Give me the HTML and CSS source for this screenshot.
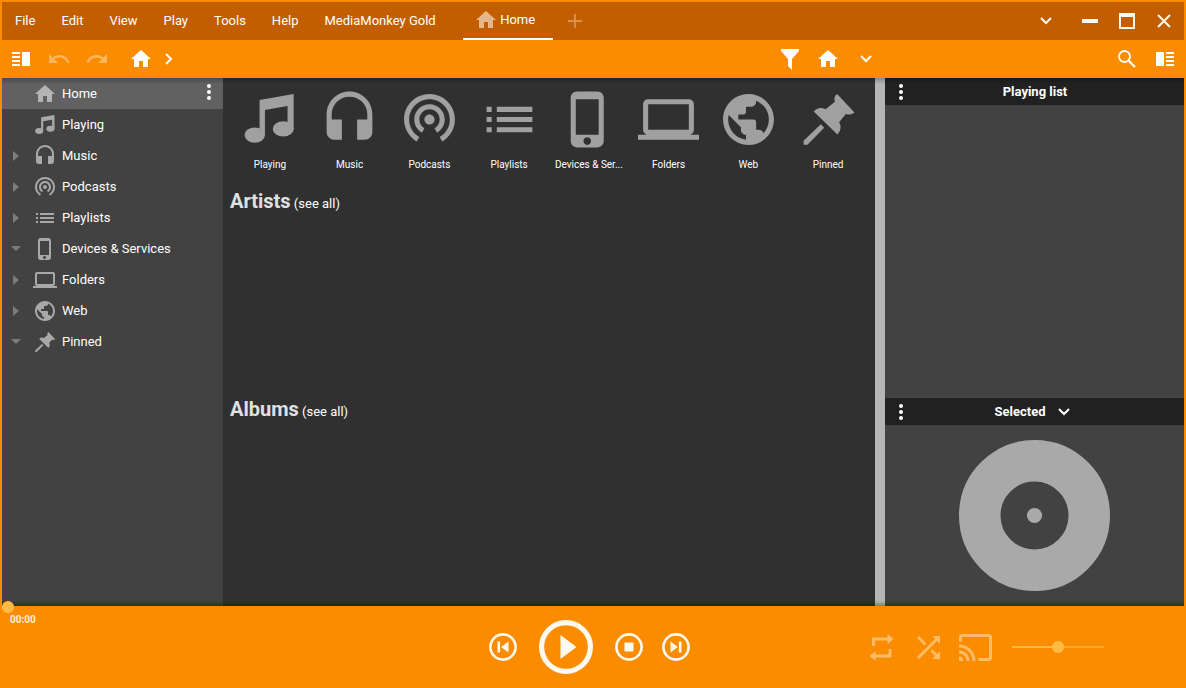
FILE: index.html
```html
<!DOCTYPE html>
<html lang="en">
<head>
<meta charset="utf-8">
<title>MediaMonkey</title>
<link rel="stylesheet" href="styles.css">
</head>
<body>
<svg class="sprite" aria-hidden="true">
  <symbol id="home" viewBox="0 0 24 24"><path d="M10 20V14H14V20H19V12H22L12 3L2 12H5V20Z"/></symbol>
  <symbol id="note" viewBox="0 0 24 24"><path d="M8.1 4.3L21.5 2V16H19.1V6.7L10.2 8.3V18H8.1Z"/><ellipse cx="6.2" cy="18.1" rx="4" ry="3"/><ellipse cx="17.4" cy="15.7" rx="4.1" ry="3"/></symbol>
  <symbol id="headset" viewBox="0 0 24 24"><path d="M12 1C7 1 3 5 3 10V17A3 3 0 0 0 6 20H9V12H5V10A7 7 0 0 1 12 3A7 7 0 0 1 19 10V12H15V20H18A3 3 0 0 0 21 17V10C21 5 16.97 1 12 1Z"/></symbol>
  <symbol id="podcast" viewBox="0 1 24 24"><path d="M12 11c-1.1 0-2 .9-2 2s.9 2 2 2 2-.9 2-2-.9-2-2-2zm6 2c0-3.31-2.69-6-6-6s-6 2.69-6 6c0 2.22 1.21 4.15 3 5.19l1-1.74c-1.19-.7-2-1.97-2-3.45 0-2.21 1.79-4 4-4s4 1.79 4 4c0 1.48-.81 2.75-2 3.45l1 1.74c1.79-1.04 3-2.97 3-5.19zM12 3C6.48 3 2 7.48 2 13c0 3.7 2.01 6.92 4.99 8.65l1-1.73C5.61 18.53 4 15.96 4 13c0-4.42 3.58-8 8-8s8 3.58 8 8c0 2.96-1.61 5.53-4 6.92l1 1.73c2.99-1.73 5-4.95 5-8.65 0-5.52-4.48-10-10-10z"/></symbol>
  <symbol id="list" viewBox="0 0 24 24"><path d="M3 7h2v2H3zM7 7h14v2H7zM3 11h2v2H3zM7 11h14v2H7zM3 15h2v2H3zM7 15h14v2H7z"/></symbol>
  <symbol id="phone" viewBox="0 0 24 24"><path d="M15.5 1h-8C6.12 1 5 2.12 5 3.5v17C5 21.88 6.12 23 7.5 23h8c1.38 0 2.5-1.12 2.5-2.5v-17C18 2.12 16.88 1 15.5 1zm-4 21c-.83 0-1.5-.67-1.5-1.5s.67-1.5 1.5-1.5 1.5.67 1.5 1.5-.67 1.5-1.5 1.5zm4.5-4H7V4h9v14z"/></symbol>
  <symbol id="laptop" viewBox="0 0 24 24"><path d="M20 18c1.1 0 1.99-.9 1.99-2L22 6c0-1.1-.9-2-2-2H4c-1.1 0-2 .9-2 2v10c0 1.1.9 2 2 2H0v2h24v-2h-4zM4 6h16v10H4V6z"/></symbol>
  <symbol id="globe" viewBox="0 0 24 24"><path d="M12 2C6.48 2 2 6.48 2 12s4.48 10 10 10 10-4.48 10-10S17.52 2 12 2zm-1 17.93c-3.95-.49-7-3.85-7-7.93 0-.62.08-1.21.21-1.79L9 15v1c0 1.1.9 2 2 2v1.93zm6.9-2.54c-.26-.81-1-1.39-1.9-1.39h-1v-3c0-.55-.45-1-1-1H8v-2h2c.55 0 1-.45 1-1V7h2c1.1 0 2-.9 2-2v-.41c2.93 1.19 5 4.06 5 7.41 0 2.08-.8 3.97-2.1 5.39z"/></symbol>
  <symbol id="pin" viewBox="0 0 24 24"><path d="M15.4 2L22.2 9.2Q21 10.4 18.8 9.8L16.2 13.1Q17.7 15.6 15.5 17.9L6.2 8.9Q8 6.7 10.9 8L14.5 5Q13.8 3.2 15.4 2ZM9 13.9L10.3 15.2L3.7 21.9H2.2V20.4Z"/></symbol>
  <symbol id="right" viewBox="0 0 6 10"><path d="M0 0L6 5L0 10Z"/></symbol>
  <symbol id="down" viewBox="0 0 10 5"><path d="M0 0H10L5 5Z"/></symbol>
  <symbol id="kebab" viewBox="0 0 4 16"><circle cx="2" cy="2" r="2"/><circle cx="2" cy="8" r="2"/><circle cx="2" cy="14" r="2"/></symbol>
  <symbol id="chevron" viewBox="0 0 12 8"><path d="M1 1L6 6L11 1" fill="none" stroke="currentColor" stroke-width="2"/></symbol>
  <symbol id="undo" viewBox="0 0 24 24"><path d="M12.5 8C9.85 8 7.45 9 5.6 10.6L2 7V16H11L7.38 12.38C8.77 11.22 10.54 10.5 12.5 10.5C16.04 10.5 19.05 12.81 20.1 16L22.47 15.22C21.08 11.03 17.15 8 12.5 8Z"/></symbol>
  <symbol id="columns" viewBox="0 0 18 14"><path d="M0 0h8v2H0zM0 4h8v2H0zM0 8h8v2H0zM0 12h8v2H0zM10 0h8v14h-8z"/></symbol>
</svg>

<div class="window">
  <header class="titlebar">
    <nav class="menu" aria-label="Menu">
      <button>File</button><button>Edit</button><button>View</button><button>Play</button><button>Tools</button><button>Help</button><button>MediaMonkey Gold</button>
    </nav>
    <button class="tab"><svg class="icon"><use href="#home"/></svg>Home</button>
    <button class="add" aria-label="New tab"><svg width="14" height="14" viewBox="0 0 14 14"><path d="M7 0V14M0 7H14" stroke="currentColor" stroke-width="2"/></svg></button>
    <div class="controls">
      <button class="more" aria-label="More"><svg width="12" height="8"><use href="#chevron"/></svg></button>
      <button aria-label="Minimize"><svg width="16" height="4"><rect width="16" height="4"/></svg></button>
      <button aria-label="Maximize"><svg width="16" height="16" viewBox="0 0 16 16"><path fill-rule="evenodd" d="M0 0H16V16H0ZM2 4V14H14V4Z"/></svg></button>
      <button aria-label="Close"><svg width="14" height="14" viewBox="0 0 14 14"><path d="M1 1L13 13M13 1L1 13" stroke="currentColor" stroke-width="2"/></svg></button>
    </div>
  </header>

  <div class="toolbar">
    <button aria-label="Left panel"><svg width="18" height="14"><use href="#columns"/></svg></button>
    <button class="dim" aria-label="Undo"><svg class="icon"><use href="#undo"/></svg></button>
    <button class="dim" aria-label="Redo"><svg class="icon flip"><use href="#undo"/></svg></button>
    <button class="crumb" aria-label="Home"><svg class="icon"><use href="#home"/></svg></button>
    <button class="next" aria-label="Expand"><svg width="8" height="12" viewBox="0 0 8 12"><path d="M1 1L6 6L1 11" fill="none" stroke="currentColor" stroke-width="2"/></svg></button>
    <div class="view">
      <button aria-label="Filter"><svg width="18" height="21" viewBox="0 0 18 21"><path d="M0 0H18V2L11 10V21L7 17V10L0 2Z"/></svg></button>
      <button aria-label="View"><svg class="icon"><use href="#home"/></svg></button>
      <button aria-label="Views"><svg width="12" height="8"><use href="#chevron"/></svg></button>
    </div>
    <div class="find">
      <button aria-label="Search"><svg width="18" height="18" viewBox="0 0 18 18"><circle cx="6.5" cy="6.5" r="5.5" fill="none" stroke="currentColor" stroke-width="1.8"/><path d="M10.5 10.5L17 17" stroke="currentColor" stroke-width="2.2"/></svg></button>
      <button aria-label="Right panel"><svg class="flip" width="18" height="14"><use href="#columns"/></svg></button>
    </div>
  </div>

  <div class="main">
    <nav class="tree" aria-label="Library">
      <div class="row selected"><span class="arrow"></span><a href="#"><svg class="icon"><use href="#home"/></svg>Home</a><button class="options" aria-label="Options"><svg width="4" height="16"><use href="#kebab"/></svg></button></div>
      <div class="row"><span class="arrow"></span><a href="#"><svg class="icon"><use href="#note"/></svg>Playing</a></div>
      <div class="row"><span class="arrow"><svg width="6" height="10"><use href="#right"/></svg></span><a href="#"><svg class="icon"><use href="#headset"/></svg>Music</a></div>
      <div class="row"><span class="arrow"><svg width="6" height="10"><use href="#right"/></svg></span><a href="#"><svg class="icon"><use href="#podcast"/></svg>Podcasts</a></div>
      <div class="row"><span class="arrow"><svg width="6" height="10"><use href="#right"/></svg></span><a href="#"><svg class="icon"><use href="#list"/></svg>Playlists</a></div>
      <div class="row"><span class="arrow"><svg width="10" height="5"><use href="#down"/></svg></span><a href="#"><svg class="icon"><use href="#phone"/></svg>Devices &amp; Services</a></div>
      <div class="row"><span class="arrow"><svg width="6" height="10"><use href="#right"/></svg></span><a href="#"><svg class="icon"><use href="#laptop"/></svg>Folders</a></div>
      <div class="row"><span class="arrow"><svg width="6" height="10"><use href="#right"/></svg></span><a href="#"><svg class="icon"><use href="#globe"/></svg>Web</a></div>
      <div class="row"><span class="arrow"><svg width="10" height="5"><use href="#down"/></svg></span><a href="#"><svg class="icon"><use href="#pin"/></svg>Pinned</a></div>
    </nav>

    <main class="content">
      <div class="tiles">
        <a href="#"><svg><use href="#note"/></svg><span>Playing</span></a>
        <a href="#"><svg><use href="#headset"/></svg><span>Music</span></a>
        <a href="#"><svg><use href="#podcast"/></svg><span>Podcasts</span></a>
        <a href="#"><svg><use href="#list"/></svg><span>Playlists</span></a>
        <a href="#" title="Devices &amp; Services"><svg><use href="#phone"/></svg><span>Devices &amp; Ser...</span></a>
        <a href="#"><svg><use href="#laptop"/></svg><span>Folders</span></a>
        <a href="#"><svg><use href="#globe"/></svg><span>Web</span></a>
        <a href="#"><svg><use href="#pin"/></svg><span>Pinned</span></a>
      </div>
      <section class="shelf"><h2>Artists</h2> <a href="#">(see all)</a></section>
      <section class="shelf"><h2>Albums</h2> <a href="#">(see all)</a></section>
    </main>

    <div class="splitter"></div>

    <aside class="side">
      <div class="head"><button aria-label="Playing list options"><svg width="4" height="16"><use href="#kebab"/></svg></button><h3>Playing list</h3></div>
      <div class="queue"></div>
      <div class="head"><button aria-label="Preview options"><svg width="4" height="16"><use href="#kebab"/></svg></button><h3 class="picker">Selected<svg width="12" height="8"><use href="#chevron"/></svg></h3></div>
      <div class="art"><svg width="151" height="151" viewBox="0 0 151 151"><circle cx="75.5" cy="75.5" r="54.75" fill="none" stroke="currentColor" stroke-width="41.5"/><circle cx="75.5" cy="75.5" r="7.6"/></svg></div>
    </aside>
  </div>

  <footer class="player">
    <input class="seek" type="range" min="0" max="100" value="0" aria-label="Position">
    <span class="time">00:00</span>
    <div class="transport">
      <button aria-label="Previous"><svg width="28" height="28" viewBox="0 0 28 28"><circle cx="14" cy="14" r="12.6" fill="none" stroke="currentColor" stroke-width="2.6"/><path d="M8.5 8.5h2.6v11H8.5zM19.5 8.5v11L12 14z"/></svg></button>
      <button class="play" aria-label="Play"><svg width="54" height="54" viewBox="0 0 54 54"><circle cx="27" cy="27" r="24.4" fill="none" stroke="currentColor" stroke-width="5.2"/><path d="M21.5 15L37.5 27L21.5 39Z"/></svg></button>
      <button class="stop" aria-label="Stop"><svg width="28" height="28" viewBox="0 0 28 28"><circle cx="14" cy="14" r="12.6" fill="none" stroke="currentColor" stroke-width="2.6"/><path d="M9.5 9.5h9v9h-9z"/></svg></button>
      <button aria-label="Next"><svg width="28" height="28" viewBox="0 0 28 28"><circle cx="14" cy="14" r="12.6" fill="none" stroke="currentColor" stroke-width="2.6"/><path d="M19.5 8.5h-2.6v11h2.6zM8.5 8.5v11L16 14z"/></svg></button>
    </div>
    <div class="extras">
      <button aria-label="Repeat"><svg width="25" height="27" viewBox="0 0 25 27"><path d="M4.5 12V5H19M21 15V22H5" fill="none" stroke="currentColor" stroke-width="2.8"/><path d="M18.5 0L24.5 5L18.5 10ZM6.5 17L.5 22L6.5 27Z"/></svg></button>
      <button aria-label="Shuffle"><svg width="23" height="23" viewBox="4 4 16 16"><path d="M10.59 9.17L5.41 4 4 5.41l5.17 5.17 1.42-1.41zM14.5 4l2.04 2.04L4 18.59 5.41 20 17.96 7.46 20 9.5V4h-5.5zm.33 9.41l-1.41 1.41 3.13 3.13L14.5 20H20v-5.5l-2.04 2.04-3.13-3.13z"/></svg></button>
      <button aria-label="Cast"><svg width="33" height="27" viewBox="1 3 22 18"><path d="M21 3H3c-1.1 0-2 .9-2 2v3h2V5h18v14h-7v2h7c1.1 0 2-.9 2-2V5c0-1.1-.9-2-2-2zM1 18v3h3c0-1.66-1.34-3-3-3zm0-4v2c2.76 0 5 2.24 5 5h2c0-3.87-3.13-7-7-7zm0-4v2c4.97 0 9 4.03 9 9h2c0-6.08-4.93-11-11-11z"/></svg></button>
      <input class="volume" type="range" min="0" max="100" value="50" aria-label="Volume">
    </div>
  </footer>
</div>
</body>
</html>
```

FILE: styles.css
```css
:root {
  --accent: #fb8c00;
  --accent-dark: #c25e00;
  --knob: #ffbb45;
  --panel: #424242;
  --icon: #a0a0a0;
}
* { box-sizing: border-box; }
body {
  margin: 0;
  font: 400 13px/16px Roboto, "Liberation Sans", sans-serif;
  color: #fff;
}
button {
  display: flex;
  align-items: center;
  justify-content: center;
  padding: 0;
  border: 0;
  background: none;
  color: inherit;
  font: inherit;
}
a { color: inherit; text-decoration: none; }
svg { display: block; flex: none; fill: currentColor; }
h2, h3 { margin: 0; }
.sprite { position: absolute; width: 0; height: 0; }
.icon { width: 24px; height: 24px; }
.flip { transform: scaleX(-1); }

.window {
  display: flex;
  flex-direction: column;
  height: 100vh;
  padding: 2px 2px 0;
  background: var(--accent);
}

.titlebar { display: flex; height: 38px; background: var(--accent-dark); }
.menu { display: flex; }
.menu button { padding: 0 13px; }
.tab {
  gap: 2px;
  width: 90px;
  margin-left: 14px;
  padding-right: 6px;
  border-bottom: 2px solid #fff;
}
.tab .icon { color: #e6b78c; }
.add { width: 44px; color: #d98e4c; }
.controls { display: flex; margin-left: auto; padding-right: 2px; color: #fff8ee; }
.controls button { width: 37px; }
.controls .more { margin-right: 7px; }

.toolbar { display: flex; height: 38px; }
.toolbar button { width: 38px; height: 38px; }
.toolbar .dim { color: #fdb65c; }
.toolbar .crumb { width: 24px; margin-left: 13px; }
.toolbar .next { width: 32px; }
.view { display: flex; margin-left: auto; }
.find { display: flex; justify-content: flex-end; width: 299px; }

.main { position: relative; display: flex; flex: 1; min-height: 0; background: var(--panel); }
.main::after {
  content: "";
  position: absolute;
  inset: 0;
  pointer-events: none;
  background:
    linear-gradient(rgba(0, 0, 0, .25), transparent) top / 100% 6px no-repeat,
    linear-gradient(transparent, rgba(0, 0, 0, .3)) bottom / 100% 5px no-repeat;
}

.tree { width: 221px; background: var(--panel); }
.row { display: flex; align-items: center; height: 31px; }
.row.selected { background: #616161; }
.row a { display: flex; align-items: center; flex: 1; gap: 5px; }
.row .icon { color: #a8a8a8; }
.selected .icon { color: #b4b4b4; }
.arrow { display: flex; justify-content: center; width: 28px; margin-right: 3px; color: #7c7c7c; }
.options { align-self: flex-start; width: 28px; height: 28px; }

.content { flex: 1; min-width: 0; background: #303030; }
.tiles { display: grid; grid-template-columns: repeat(8, minmax(0, 1fr)); padding: 11px 7px 0; }
.tiles a { display: flex; flex-direction: column; align-items: center; gap: 9px; }
.tiles svg { width: 61px; height: 61px; color: var(--icon); }
.tiles span { font-size: 10px; line-height: 12px; white-space: nowrap; }
.shelf { height: 208px; padding: 17px 7px 0; }
.shelf h2 { display: inline; font-size: 20px; font-weight: 700; line-height: 26px; color: #e0e0e0; }

.splitter { width: 10px; background: #b5b5b5; }

.side { display: flex; flex-direction: column; width: 299px; }
.head { display: flex; align-items: center; height: 27px; background: #212121; }
.head button { width: 32px; height: 27px; }
.head h3 { display: flex; align-items: center; justify-content: center; flex: 1; margin-right: 31px; font-size: 13px; font-weight: 700; }
.head .picker { gap: 12px; margin-right: 37px; }
.queue { flex: 1; }
.art { display: flex; justify-content: center; padding: 15px 0; color: #a9a9a9; }

.player {
  position: relative;
  display: grid;
  grid-template-columns: 1fr auto 1fr;
  align-items: center;
  height: 82px;
}
.time { align-self: start; padding: 8px; font-size: 10px; font-weight: 700; line-height: 12px; color: #fff0d8; }
.transport { display: flex; align-items: center; padding: 0 7px 1px 0; color: #fffaf0; }
.play { margin: 0 22px; }
.stop { margin-right: 19px; }
.extras { display: flex; align-items: center; justify-content: flex-end; padding-right: 80px; color: #fdbc68; }
.extras button { margin-right: 23px; }
.extras button + button { margin-right: 19px; }
.extras button:last-of-type { margin-right: 20px; }

input[type="range"] { appearance: none; margin: 0; height: 12px; background: none; }
input[type="range"]::-webkit-slider-thumb {
  appearance: none;
  width: 12px;
  height: 12px;
  border-radius: 50%;
  background: var(--knob);
}
.seek { position: absolute; top: -5px; left: 0; width: 100%; }
.volume { width: 92px; }
input.volume { background: linear-gradient(90deg, var(--knob) 50%, #ffa62c 50%) center / 100% 2px no-repeat; }
```
